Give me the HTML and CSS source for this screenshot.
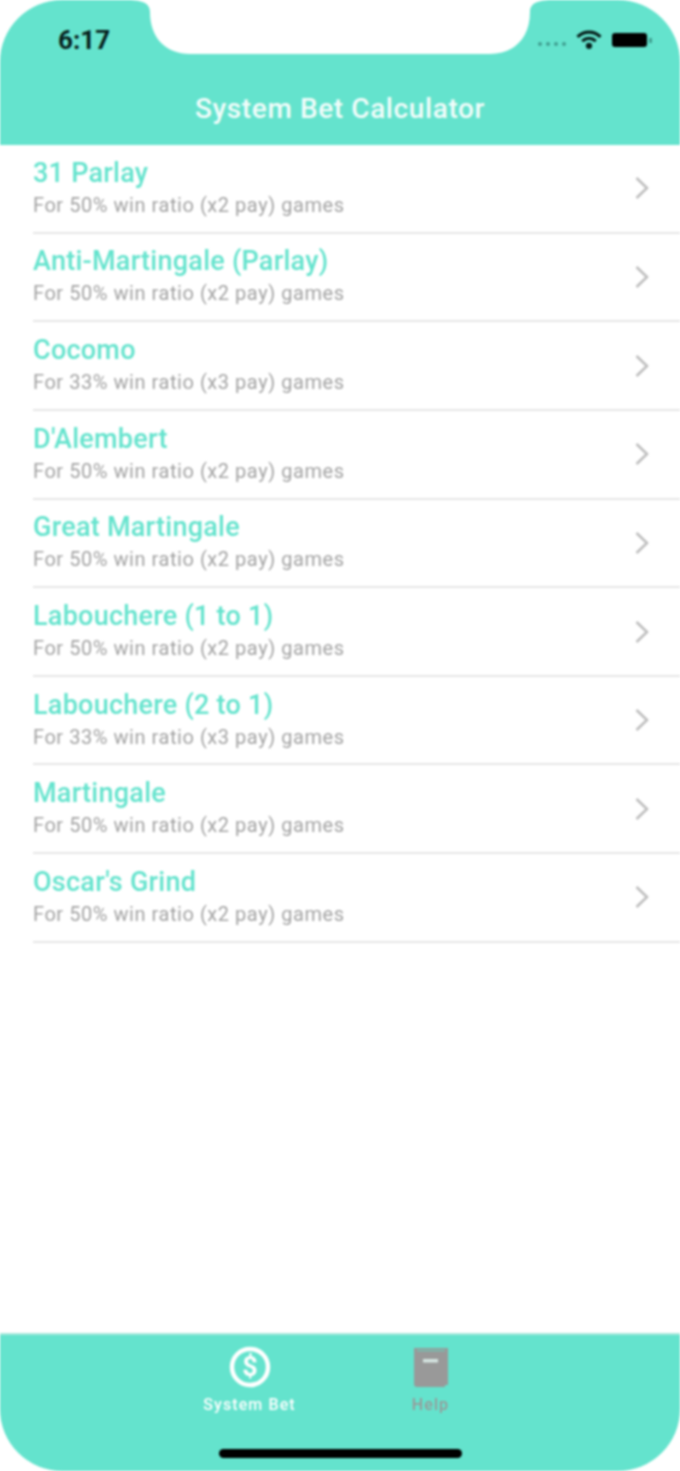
FILE: index.html
```html
<!DOCTYPE html>
<html lang="en">

<head>
    <meta charset="UTF-8">
    <meta name="viewport" content="width=device-width, initial-scale=1.0">
    <title>System Bet Calculator</title>
    <link rel="stylesheet" href="styles.css">
</head>

<body>
    <div class="screen">
        <header class="top-bar">
            <svg class="notch" width="428" height="55" viewBox="0 0 428 55">
                <path d="M0 0 H428 C414 0 404 2 404 12 C404 38 388 54 364 54 H64 C40 54 24 38 24 12 C24 2 14 0 0 0 Z" fill="#fff" />
            </svg>
            <div class="status-bar">
                <span class="time">6:17</span>
                <div class="status-icons">
                    <span class="signal"><i></i><i></i><i></i><i></i></span>
                    <svg class="wifi" width="28" height="21" viewBox="0 0 26 20">
                        <path d="M2 7.500 C8.500 1.500 17.500 1.500 24 7.500" />
                        <path d="M6.500 11.500 C10.500 8 15.500 8 19.500 11.500" />
                        <circle cx="13" cy="16" r="3" />
                    </svg>
                    <span class="battery"></span>
                    <span class="battery-tip"></span>
                </div>
            </div>
            <h1 class="title">System Bet Calculator</h1>
        </header>

        <ul class="system-list">
            <li class="system-row">
                <div class="system-text">
                    <span class="system-name">31 Parlay</span>
                    <span class="system-note">For 50% win ratio (x2 pay) games</span>
                </div>
                <svg class="chevron" width="16" height="24" viewBox="0 0 16 24"><path d="M2.500 2 L13 12 L2.500 22" /></svg>
            </li>
            <li class="system-row">
                <div class="system-text">
                    <span class="system-name">Anti-Martingale (Parlay)</span>
                    <span class="system-note">For 50% win ratio (x2 pay) games</span>
                </div>
                <svg class="chevron" width="16" height="24" viewBox="0 0 16 24"><path d="M2.500 2 L13 12 L2.500 22" /></svg>
            </li>
            <li class="system-row">
                <div class="system-text">
                    <span class="system-name">Cocomo</span>
                    <span class="system-note">For 33% win ratio (x3 pay) games</span>
                </div>
                <svg class="chevron" width="16" height="24" viewBox="0 0 16 24"><path d="M2.500 2 L13 12 L2.500 22" /></svg>
            </li>
            <li class="system-row">
                <div class="system-text">
                    <span class="system-name">D'Alembert</span>
                    <span class="system-note">For 50% win ratio (x2 pay) games</span>
                </div>
                <svg class="chevron" width="16" height="24" viewBox="0 0 16 24"><path d="M2.500 2 L13 12 L2.500 22" /></svg>
            </li>
            <li class="system-row">
                <div class="system-text">
                    <span class="system-name">Great Martingale</span>
                    <span class="system-note">For 50% win ratio (x2 pay) games</span>
                </div>
                <svg class="chevron" width="16" height="24" viewBox="0 0 16 24"><path d="M2.500 2 L13 12 L2.500 22" /></svg>
            </li>
            <li class="system-row">
                <div class="system-text">
                    <span class="system-name">Labouchere (1 to 1)</span>
                    <span class="system-note">For 50% win ratio (x2 pay) games</span>
                </div>
                <svg class="chevron" width="16" height="24" viewBox="0 0 16 24"><path d="M2.500 2 L13 12 L2.500 22" /></svg>
            </li>
            <li class="system-row">
                <div class="system-text">
                    <span class="system-name">Labouchere (2 to 1)</span>
                    <span class="system-note">For 33% win ratio (x3 pay) games</span>
                </div>
                <svg class="chevron" width="16" height="24" viewBox="0 0 16 24"><path d="M2.500 2 L13 12 L2.500 22" /></svg>
            </li>
            <li class="system-row">
                <div class="system-text">
                    <span class="system-name">Martingale</span>
                    <span class="system-note">For 50% win ratio (x2 pay) games</span>
                </div>
                <svg class="chevron" width="16" height="24" viewBox="0 0 16 24"><path d="M2.500 2 L13 12 L2.500 22" /></svg>
            </li>
            <li class="system-row">
                <div class="system-text">
                    <span class="system-name">Oscar's Grind</span>
                    <span class="system-note">For 50% win ratio (x2 pay) games</span>
                </div>
                <svg class="chevron" width="16" height="24" viewBox="0 0 16 24"><path d="M2.500 2 L13 12 L2.500 22" /></svg>
            </li>
        </ul>

        <footer class="tab-bar">
            <div class="tabs">
                <div class="tab tab-active">
                    <svg class="tab-icon" width="42" height="42" viewBox="0 0 42 42">
                        <circle cx="21" cy="21" r="18" fill="none" stroke="#fff" stroke-width="4.500" />
                        <text x="21" y="30" text-anchor="middle" class="dollar">$</text>
                    </svg>
                    <span class="tab-label">System Bet</span>
                </div>
                <div class="tab">
                    <svg class="tab-icon" width="42" height="42" viewBox="0 0 42 42">
                        <path d="M4 2 H38 V39 H35 V41 H7 Q4 41 4 38 Z" fill="#999" />
                        <path d="M7 4.500 H35" stroke="#6fc4b3" stroke-width="1.500" />
                        <rect x="13" y="13" width="15" height="3.500" fill="#d6e6e2" />
                    </svg>
                    <span class="tab-label">Help</span>
                </div>
            </div>
            <div class="home-bar"></div>
        </footer>
    </div>
</body>

</html>
```

FILE: styles.css
```css
* {
    box-sizing: border-box;
}

html,
body {
    margin: 0;
    height: 100%;
    background-color: #fff;
}

.screen {
    display: flex;
    flex-direction: column;
    height: 1471px;
    font-family: Roboto, "Liberation Sans", sans-serif;
    filter: blur(0.8px);
}

.top-bar {
    position: relative;
    height: 145px;
    background-color: #64e3cd;
    border-radius: 62px 62px 0 0;
    padding-top: 25px;
}

.notch {
    position: absolute;
    top: 0;
    left: 126px;
}

.status-bar {
    display: flex;
    justify-content: space-between;
    align-items: center;
    height: 30px;
    padding: 0 28px 0 58px;
}

.time {
    font-size: 26px;
    font-weight: 700;
    color: #06201c;
}

.status-icons {
    display: flex;
    align-items: center;
}

.signal {
    display: flex;
    gap: 4px;
    margin-top: 8px;
    margin-right: 9px;
}

.signal i {
    width: 4px;
    height: 4px;
    border-radius: 50%;
    background-color: #3f9f90;
}

.wifi {
    margin-right: 9px;
    margin-top: -2px;
}

.wifi path {
    fill: none;
    stroke: #06201c;
    stroke-width: 3;
}

.wifi circle {
    fill: #06201c;
}

.battery {
    width: 35px;
    height: 14px;
    border-radius: 3px;
    background-color: #000;
}

.battery-tip {
    width: 3px;
    height: 5px;
    margin-left: 2px;
    background-color: #3f9f90;
}

.title {
    margin: 34px 0 0;
    font-size: 28px;
    font-weight: 500;
    letter-spacing: 0.6px;
    line-height: 40px;
    text-align: center;
    color: #f2fdfb;
}

.system-list {
    flex: 1;
    margin: 0;
    padding: 0;
    list-style: none;
}

.system-row {
    display: flex;
    align-items: center;
    justify-content: space-between;
    height: 88.65px;
    margin-left: 33px;
    padding: 0 30px 0 0;
    border-bottom: 2px solid #e6e6e6;
}

.system-text {
    display: flex;
    flex-direction: column;
}

.system-name {
    margin-top: -1px;
    font-size: 27px;
    font-weight: 500;
    letter-spacing: 0.25px;
    line-height: 34px;
    color: #64e3cd;
}

.system-note {
    font-size: 20px;
    letter-spacing: 0.55px;
    line-height: 30px;
    color: #a3a3a3;
}

.chevron path {
    fill: none;
    stroke: #bdbdbd;
    stroke-width: 2.500;
}

.tab-bar {
    height: 138px;
    background-color: #64e3cd;
    border-top: 2px solid #a8e8dc;
    border-radius: 0 0 62px 62px;
}

.tabs {
    display: flex;
    justify-content: center;
    gap: 0;
    padding-top: 11px;
}

.tab {
    display: flex;
    flex-direction: column;
    align-items: center;
    width: 181px;
    color: #999;
}

.tab-active {
    color: #fff;
}

.dollar {
    font-family: Roboto, sans-serif;
    font-size: 27px;
    font-weight: 700;
    fill: #fff;
}

.tab-label {
    margin-top: 7px;
    font-size: 16px;
    font-weight: 500;
    letter-spacing: 1.1px;
    line-height: 20px;
}

.home-bar {
    width: 243px;
    height: 9px;
    margin: 34px auto 0;
    border-radius: 5px;
    background-color: #000;
}
```
